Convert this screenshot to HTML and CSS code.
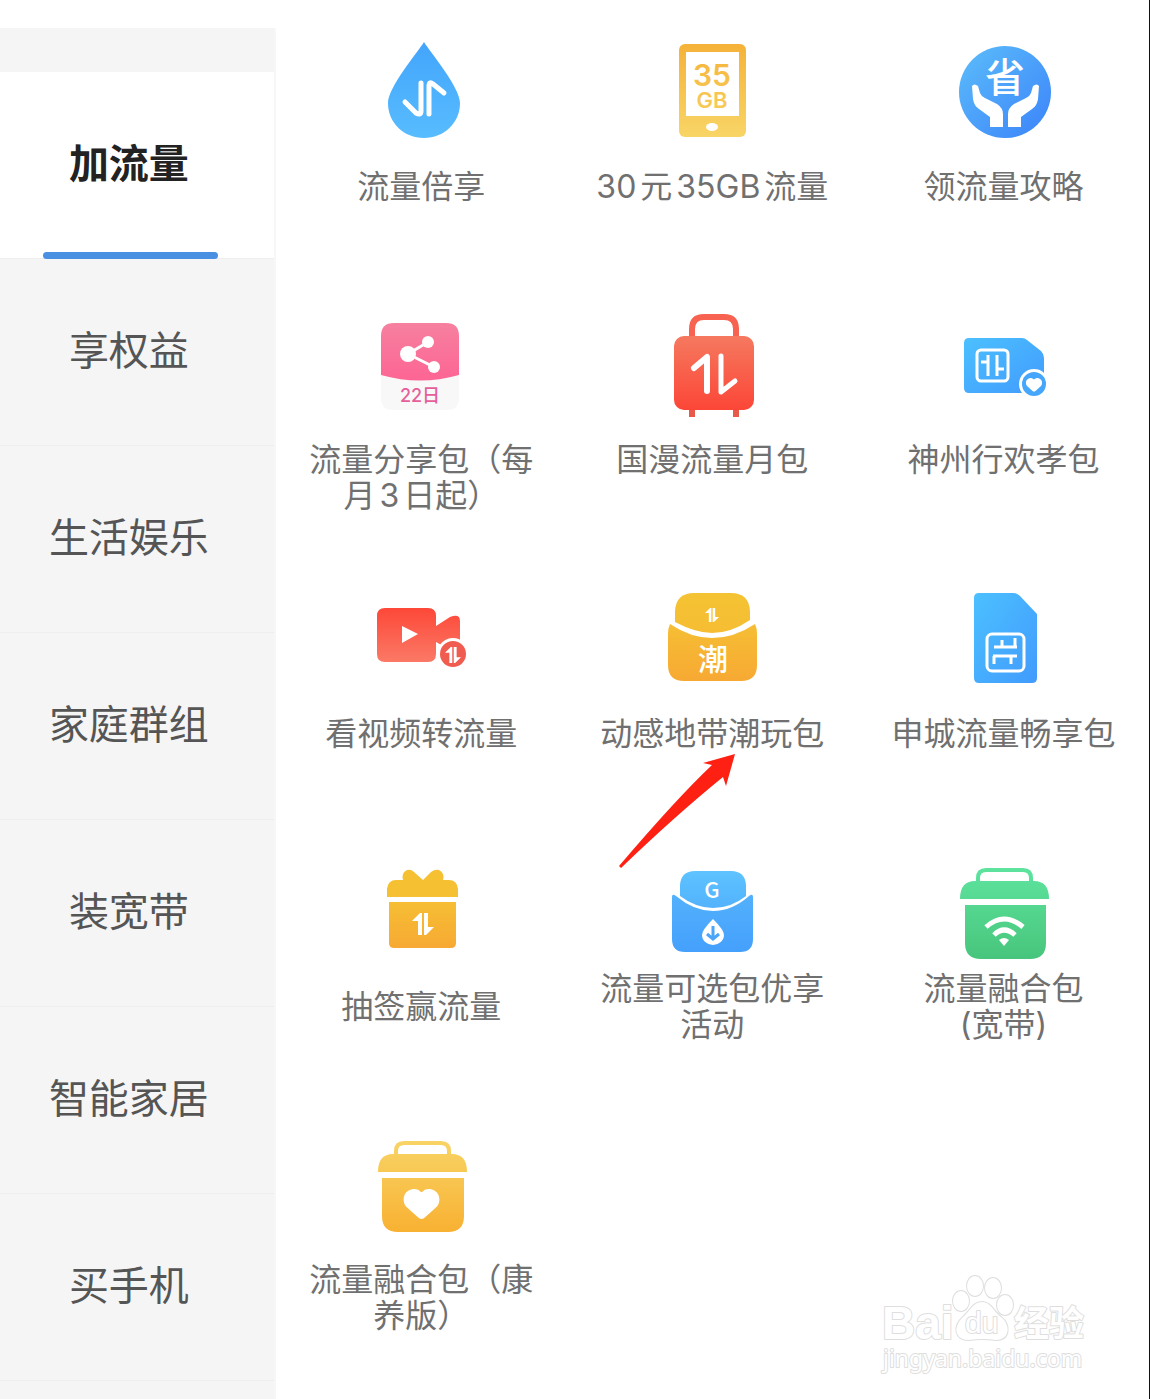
FILE: index.html
```html
<!DOCTYPE html>
<html lang="zh-CN">
<head>
<meta charset="utf-8">
<meta name="viewport" content="width=device-width, initial-scale=1">
<title>加流量</title>
<link rel="stylesheet" href="styles.css">
</head>
<body>
<svg class="defs" aria-hidden="true">
  <defs>
    <linearGradient id="blueDown" x1="0" y1="0" x2="0" y2="1"><stop offset="0" stop-color="#43a5fb"/><stop offset="1" stop-color="#58bcff"/></linearGradient>
    <linearGradient id="blueDiag" x1="0" y1="0" x2="1" y2="1"><stop offset="0" stop-color="#4cc0ff"/><stop offset="1" stop-color="#419bfd"/></linearGradient>
    <linearGradient id="blueCircle" x1="0" y1="0" x2="1" y2="1"><stop offset="0" stop-color="#5cbdfa"/><stop offset="1" stop-color="#3b83fa"/></linearGradient>
    <linearGradient id="blueFlap" x1="0" y1="0" x2="0" y2="1"><stop offset="0" stop-color="#5ec3ff"/><stop offset="1" stop-color="#52b2fd"/></linearGradient>
    <linearGradient id="bluePouch" x1="0" y1="0" x2="0" y2="1"><stop offset="0" stop-color="#53b1fc"/><stop offset="1" stop-color="#44a0fc"/></linearGradient>
    <linearGradient id="phone" gradientUnits="userSpaceOnUse" x1="0" y1="3" x2="0" y2="96"><stop offset="0" stop-color="#f5b238"/><stop offset="1" stop-color="#f8d567"/></linearGradient>
    <linearGradient id="pink" x1="0" y1="0" x2="0" y2="1"><stop offset="0" stop-color="#f6809f"/><stop offset="1" stop-color="#fd6594"/></linearGradient>
    <linearGradient id="redDown" x1="0" y1="0" x2="0" y2="1"><stop offset="0" stop-color="#f5795f"/><stop offset="1" stop-color="#fc4637"/></linearGradient>
    <linearGradient id="redUp" x1="0" y1="0" x2="0" y2="1"><stop offset="0" stop-color="#fd4838"/><stop offset="1" stop-color="#fb7966"/></linearGradient>
    <linearGradient id="flapYellow" x1="0" y1="0" x2="0" y2="1"><stop offset="0" stop-color="#f4c333"/><stop offset="1" stop-color="#f6bd33"/></linearGradient>
    <linearGradient id="amber" x1="0" y1="0" x2="0" y2="1"><stop offset="0" stop-color="#f6be34"/><stop offset="1" stop-color="#f7a933"/></linearGradient>
    <linearGradient id="greenBox" gradientUnits="userSpaceOnUse" x1="0" y1="6" x2="0" y2="98"><stop offset="0" stop-color="#5ee49f"/><stop offset="1" stop-color="#48c57c"/></linearGradient>
    <linearGradient id="goldBox" gradientUnits="userSpaceOnUse" x1="0" y1="6" x2="0" y2="98"><stop offset="0" stop-color="#f8d466"/><stop offset="1" stop-color="#f8b132"/></linearGradient>
  </defs>
  <symbol id="heart" viewBox="0 0 38 32"><path d="M19 31Q17 31 15 29L3 18C-1 13 0 5 5 2C10-1 15 0 17 2Q19 4 21 2C23 0 28-1 33 2C38 5 39 13 35 18L23 29Q21 31 19 31Z"/></symbol>
  <symbol id="updown" viewBox="0 0 22 22"><path d="M0 8L8 0H10V22H6V8ZM12 0H16V14H22L14 22H12Z"/></symbol>
</svg>

<div class="page">
  <nav class="sidebar" aria-label="分类">
    <a class="tab tab--active" href="#data" aria-current="page">加流量</a>
    <a class="tab" href="#rights">享权益</a>
    <a class="tab" href="#life">生活娱乐</a>
    <a class="tab" href="#family">家庭群组</a>
    <a class="tab" href="#broadband">装宽带</a>
    <a class="tab" href="#home">智能家居</a>
    <a class="tab" href="#phone-shop">买手机</a>
  </nav>

  <main class="tiles" id="data">
    <a class="tile" href="#double">
      <svg class="icon" viewBox="0 0 120 100" aria-hidden="true">
        <path fill="url(#blueDown)" d="M63 1C69 11 99 46 99 62C99 82 83 97 63 97S27 82 27 62C27 46 57 11 63 1Z"/>
        <path class="line w5" d="M44 61L55 72Q60 75 60 70V42M68 73V45Q68 40 72 43L83 52"/>
      </svg>
      <span class="label">流量倍享</span>
    </a>

    <a class="tile" href="#35gb">
      <svg class="icon" viewBox="0 0 120 100" aria-hidden="true">
        <rect x="27" y="3" width="67" height="93" rx="6" fill="url(#phone)"/>
        <rect x="34" y="11" width="53" height="64" fill="#fff"/>
        <ellipse cx="60" cy="86" rx="6" ry="4" fill="#fff"/>
        <text class="t35" x="60" y="45" fill="url(#phone)">35</text>
        <text class="tgb" x="60" y="67" fill="url(#phone)">GB</text>
      </svg>
      <span class="label">30元35GB流量</span>
    </a>

    <a class="tile" href="#guide">
      <svg class="icon" viewBox="0 0 120 100" aria-hidden="true">
        <circle cx="62" cy="51" r="46" fill="url(#blueCircle)"/>
        <text class="tsave" x="62" y="51">省</text>
        <g fill="#fff">
          <path d="M29 45Q31 42 35 45L37 52Q38 55 42 57L54 63Q60 67 60 73V86H47V76L36 68Q31 65 30 58Z"/>
          <path d="M96 45Q94 42 90 45L88 52Q87 55 83 57L71 63Q65 67 65 73V86H78V76L89 68Q94 65 95 58Z"/>
        </g>
      </svg>
      <span class="label">领流量攻略</span>
    </a>

    <a class="tile" href="#share">
      <svg class="icon" viewBox="0 0 120 100" aria-hidden="true">
        <path fill="#f8f8f9" d="M20 58H98V84Q98 96 86 96H32Q20 96 20 84Z"/>
        <path fill="url(#pink)" d="M20 61V22Q20 9 33 9H85Q98 9 98 22V61Q59 72 20 61Z"/>
        <path class="line w3" d="M67 28L47 40L73 53"/>
        <g fill="#fff"><circle cx="47" cy="40" r="8"/><circle cx="67" cy="28" r="6"/><circle cx="73" cy="53" r="6"/></g>
        <text class="tday" x="59" y="88">22日</text>
      </svg>
      <span class="label">流量分享包（每月3日起）</span>
    </a>

    <a class="tile" href="#roaming">
      <svg class="icon" viewBox="0 0 120 100" aria-hidden="true">
        <path fill="none" stroke="#f76350" stroke-width="6" d="M40 24V15Q40 3 52 3H72Q84 3 84 15V24"/>
        <path fill="#e9594a" d="M37 95H43V103H37ZM81 95H87V103H81Z"/>
        <rect x="22" y="22" width="80" height="74" rx="10" fill="url(#redDown)"/>
        <path class="line w6" d="M42 54L55 43V77"/>
        <path class="line w5" d="M69 42V78L83 67"/>
      </svg>
      <span class="label">国漫流量月包</span>
    </a>

    <a class="tile" href="#senior">
      <svg class="icon" viewBox="0 0 120 100" aria-hidden="true">
        <path fill="url(#blueDiag)" d="M26 24H79Q82 24 84 26L98 37Q101 40 101 44V79H26Q21 79 21 74V29Q21 24 26 24Z"/>
        <rect class="line w3" x="34" y="36" width="31" height="31" rx="4"/>
        <path class="line w3 flat" d="M38 48H45M45 41V62M54 41V62M54 55H61"/>
        <circle cx="91" cy="70" r="15" fill="#fff"/><circle cx="91" cy="70" r="12" fill="#46a6fb"/>
        <use href="#heart" x="82" y="64" width="18" height="14" fill="#fff"/>
      </svg>
      <span class="label">神州行欢孝包</span>
    </a>

    <a class="tile" href="#video">
      <svg class="icon" viewBox="0 0 120 100" aria-hidden="true">
        <path fill="url(#redUp)" d="M24 20H67Q75 20 75 28V38L89 29Q99 25 99 33V58H82L75 54V66Q75 74 67 74H24Q16 74 16 66V28Q16 20 24 20Z"/>
        <path fill="#fff" d="M41 38L57 46L41 55Z"/>
        <circle cx="92" cy="66" r="16" fill="#fff"/><circle cx="92" cy="66" r="13" fill="#f05c50"/>
        <use href="#updown" x="84" y="59" width="16" height="16" fill="#fff"/>
      </svg>
      <span class="label">看视频转流量</span>
    </a>

    <a class="tile" href="#trend">
      <svg class="icon" viewBox="0 0 120 100" aria-hidden="true">
        <path fill="url(#flapYellow)" d="M23 34V23Q24 5 42 5H79Q97 5 98 23V32Q79 45 60 45Q44 45 23 34Z"/>
        <path fill="url(#amber)" d="M18 36Q39 50 60 50Q82 50 103 36Q105 40 105 46V77Q105 93 89 93H32Q16 93 16 77V46Q16 40 18 36Z"/>
        <use href="#updown" x="53" y="20" width="14" height="14" fill="#fff"/>
        <text class="ttide" x="61" y="82">潮</text>
      </svg>
      <span class="label">动感地带潮玩包</span>
      <svg class="pointer" viewBox="0 0 117 116" aria-hidden="true"><path fill="#ff2014" d="M116 1L84 10L93 12Q58 45 0 113L2 115Q56 63 104 24L107 33Z"/></svg>
    </a>

    <a class="tile" href="#city">
      <svg class="icon" viewBox="0 0 120 100" aria-hidden="true">
        <path fill="url(#blueDiag)" d="M36 5H70Q74 5 77 8L94 26V90Q94 95 89 95H36Q31 95 31 90V10Q31 5 36 5Z"/>
        <rect class="line w3" x="44" y="46" width="37" height="37" rx="5"/>
        <path class="line w3 flat" d="M51 59H74M59 52V59M72 50V59M50 68H74M51 68V76M68 68V76"/>
      </svg>
      <span class="label">申城流量畅享包</span>
    </a>

    <a class="tile tile--snug" href="#lottery">
      <svg class="icon" viewBox="0 0 120 100" aria-hidden="true">
        <path fill="#f5c032" d="M26 36V28Q27 19 35 19H42Q40 12 46 9Q50 8 53 11L62 19L70 11Q74 8 78 9Q84 12 82 19H88Q96 19 97 28V36Z"/>
        <path fill="url(#amber)" d="M28 41H95V82Q95 87 90 87H33Q28 87 28 82Z"/>
        <use href="#updown" x="51" y="52" width="22" height="22" fill="#fff"/>
      </svg>
      <span class="label">抽签赢流量</span>
    </a>

    <a class="tile tile--snug" href="#optional">
      <svg class="icon" viewBox="0 0 120 100" aria-hidden="true">
        <path fill="url(#blueFlap)" d="M28 35V24Q29 10 43 10H79Q93 10 94 24V35Q79 47 61 47Q44 47 28 35Z"/>
        <path fill="url(#bluePouch)" d="M20 36Q20 32 24 35Q42 50 61 50Q80 50 97 35Q101 32 101 36V78Q101 91 88 91H33Q20 91 20 78Z"/>
        <text class="tg" x="60" y="37">G</text>
        <path fill="#fff" d="M61 58Q72 69 72 74A11 10 0 0 1 50 74Q50 69 61 58Z"/>
        <path fill="none" stroke="#4aa5fb" stroke-width="3" d="M61 65V78M55 73L61 78L67 73"/>
      </svg>
      <span class="label">流量可选包优享活动</span>
    </a>

    <a class="tile tile--snug" href="#fusion">
      <svg class="icon" viewBox="0 0 120 100" aria-hidden="true">
        <path fill="none" stroke="url(#greenBox)" stroke-width="4" d="M35 21V17Q35 9 43 9H80Q88 9 88 17V21"/>
        <path fill="url(#greenBox)" d="M17 38Q17 20 32 20H91Q106 20 106 38ZM22 44H103V82Q103 98 87 98H38Q22 98 22 82Z"/>
        <path class="line w5 flat" d="M43 66Q61 50 80 66M51 74Q61 64 72 74"/>
        <path fill="#fff" d="M56 79Q61 75 66 79L61 85Z"/>
      </svg>
      <span class="label">流量融合包<br>(宽带)</span>
    </a>

    <a class="tile" href="#wellness">
      <svg class="icon" viewBox="0 0 120 100" aria-hidden="true">
        <path fill="none" stroke="url(#goldBox)" stroke-width="4" d="M35 21V17Q35 9 43 9H80Q88 9 88 17V21"/>
        <path fill="url(#goldBox)" d="M17 38Q17 20 32 20H91Q106 20 106 38ZM21 44H103V82Q103 98 87 98H37Q21 98 21 82Z"/>
        <use href="#heart" x="42" y="55" width="37" height="31" fill="#fff"/>
      </svg>
      <span class="label">流量融合包（康养版）</span>
    </a>
  </main>

  <svg class="watermark" viewBox="0 0 210 110" role="img" aria-label="Baidu经验">
    <g class="outline">
      <text class="wbai" x="2" y="69">Bai</text>
      <ellipse cx="81" cy="31" rx="8" ry="10"/><ellipse cx="95" cy="16" rx="8" ry="10"/><ellipse cx="113" cy="18" rx="8" ry="10"/><ellipse cx="125" cy="35" rx="8" ry="10"/>
      <path d="M102 32C111 32 113 41 121 47C131 55 130 70 116 70Q102 68 89 70C74 70 73 56 83 47C90 41 93 32 102 32Z"/>
      <text class="wdu" x="85" y="63">du</text>
      <text class="wexp" x="134" y="66">经验</text>
      <text class="wurl" x="3" y="97">jingyan.baidu.com</text>
    </g>
  </svg>
</div>
</body>
</html>
```

FILE: styles.css
```css
* { box-sizing: border-box; }

body {
  margin: 0;
  background: #fff;
  font-family: Inter, "Noto Sans CJK SC", sans-serif;
}

a { color: inherit; text-decoration: none; }

.defs { position: absolute; width: 0; height: 0; }

.page {
  position: relative;
  display: grid;
  grid-template-columns: 24% 1fr;
  min-height: 100vh;
  border-right: 1px solid #111;
}

/* Category tabs */
.sidebar {
  margin-top: 28px;
  padding-top: 44px;
  background: #f5f5f5;
  border-right: 2px solid #f7f7f7;
  color: #555;
  font-size: 40px;
  line-height: 60px;
}

.tab {
  display: flex;
  align-items: center;
  justify-content: center;
  position: relative;
  height: 187px;
  padding: 0 16px 2px 0;
  border-bottom: 1px solid #eee;
}

.tab--active {
  background: #fff;
  color: #222;
  font-weight: 700;
}

.tab--active::after {
  content: "";
  position: absolute;
  left: 43px;
  right: 56px;
  bottom: -1px;
  height: 7px;
  border-radius: 4px;
  background: #4a90e2;
}

/* Service tiles */
.tiles {
  display: grid;
  grid-template-columns: repeat(3, 1fr);
  grid-auto-rows: minmax(199px, auto);
  align-content: start;
  row-gap: 74px;
  padding-top: 41px;
}

.tile {
  position: relative;
  display: flex;
  flex-direction: column;
  align-items: center;
  gap: 28px;
  color: #707070;
}

.tile--snug { gap: 10px; }

.icon {
  flex: none;
  width: 120px;
  height: 100px;
  overflow: visible;
}

.label {
  max-width: 240px;
  font-size: 32px;
  line-height: 36px;
  text-align: center;
  text-autospace: normal;
}

.tile--snug .label {
  display: flow-root;
  align-content: center;
  min-height: 72px;
}

.pointer {
  position: absolute;
  top: 165px;
  left: calc(50% - 93px);
  width: 117px;
  height: 116px;
}

/* Icon strokes and lettering */
.line {
  fill: none;
  stroke: #fff;
  stroke-linecap: round;
  stroke-linejoin: round;
}

.flat { stroke-linecap: butt; }
.w3 { stroke-width: 3px; }
.w5 { stroke-width: 5px; }
.w6 { stroke-width: 6px; }

.icon text { text-anchor: middle; }
.t35 { font-size: 30px; font-weight: 600; }
.tgb { font-size: 22px; font-weight: 600; }
.tsave { font-size: 40px; font-weight: 500; fill: #fff; }
.tday { font-size: 18px; font-weight: 500; fill: #e5609a; }
.ttide { font-size: 30px; font-weight: 500; fill: #fff; }
.tg { font-family: "Noto Sans CJK SC", sans-serif; font-size: 22px; font-weight: 500; fill: #fff; }

/* Watermark */
.watermark {
  position: absolute;
  right: 59px;
  bottom: 19px;
  width: 210px;
  height: 110px;
}

.outline {
  fill: #fff;
  stroke: #dedede;
  stroke-width: 2px;
  stroke-linejoin: round;
  paint-order: stroke;
}

.wbai { font-family: "Liberation Sans", sans-serif; font-size: 46px; font-weight: 700; }
.wdu { font-family: "Liberation Sans", sans-serif; font-size: 30px; }
.wexp { font-size: 35px; font-weight: 700; }
.wurl { font-family: "Noto Sans", sans-serif; font-size: 23px; }
```
